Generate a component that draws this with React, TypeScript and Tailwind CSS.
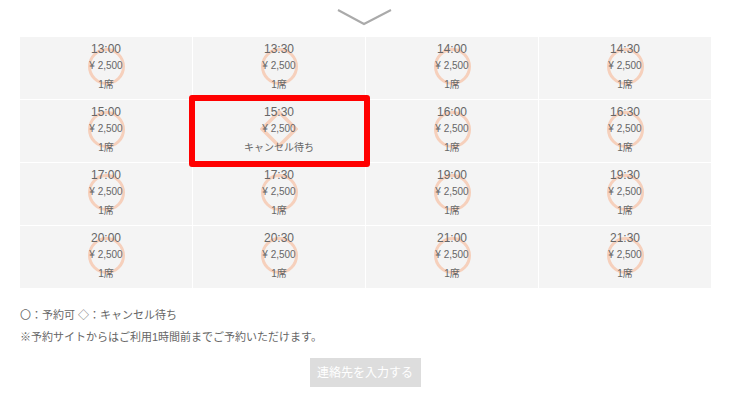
import React from "react";

const times = [
  "13:00", "13:30", "14:00", "14:30",
  "15:00", "15:30", "16:00", "16:30",
  "17:00", "17:30", "19:00", "19:30",
  "20:00", "20:30", "21:00", "21:30",
];

const font = { fontFamily: '"Liberation Sans", Arial, "Noto Sans CJK JP", sans-serif' };

function Cell({ time }: { time: string }) {
  const cancel = time === "15:30";
  return (
    <div className="relative h-[62px] bg-[#f4f4f4] flex flex-col items-center pt-[5px] text-[#666]">
      {cancel ? (
        <svg className="absolute left-1/2 top-[10px] -ml-[19px]" width="38" height="38" viewBox="0 0 38 38">
          <polygon points="19,2 36,19 19,36 2,19" fill="none" stroke="#f6d0bc" strokeWidth="3.5" />
        </svg>
      ) : (
        <div className="absolute left-1/2 top-[11px] w-[37px] h-[37px] -ml-[18px] rounded-full border-[3px] border-[#f6d0bc]" />
      )}
      <div className="relative text-[12px] leading-[14px]">{time}</div>
      <div className="relative text-[10px] leading-[18px] mt-[1px]">¥ 2,500</div>
      <div className="relative text-[10px] leading-[16px] mt-[2px]">{cancel ? "キャンセル待ち" : "1席"}</div>
      {cancel && (
        <div className="absolute -left-[4px] -right-[5px] -top-[5px] -bottom-[5px] border-[6px] border-[#ff0000] rounded-[3px] z-10" />
      )}
    </div>
  );
}

export default function App() {
  return (
    <div className="w-[730px] h-[407px] bg-white overflow-hidden" style={font}>
      <div className="flex justify-center pt-[9px] h-[37px]">
        <svg width="56" height="18" viewBox="0 0 56 18">
          <polyline points="1,1 27,15 54,1" fill="none" stroke="#aaaaaa" strokeWidth="2" />
        </svg>
      </div>
      <div className="mx-[20px] grid grid-cols-4 gap-[1px] w-[691px]">
        {times.map((t) => (
          <Cell key={t} time={t} />
        ))}
      </div>
      <div className="px-[20px] mt-[19px] text-[11px] text-[#666]">
        <div className="leading-[16px]">〇：予約可 ◇：キャンセル待ち</div>
        <div className="leading-[16px] mt-[6px]">※予約サイトからはご利用1時間前までご予約いただけます。</div>
      </div>
      <div className="flex justify-center mt-[13px]">
        <div className="w-[111px] h-[29px] bg-[#dddddd] text-white text-[12px] flex items-center justify-center">
          連絡先を入力する
        </div>
      </div>
    </div>
  );
}
